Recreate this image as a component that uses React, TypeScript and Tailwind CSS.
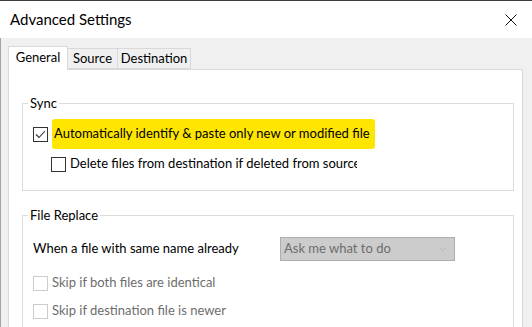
import { ChevronDown } from "lucide-react";

const font = "font-['Lato','Noto_Sans',sans-serif]";

function CheckBox({ checked, disabled }: { checked?: boolean; disabled?: boolean }) {
  return (
    <span
      className={
        "flex size-[15px] shrink-0 items-center justify-center border bg-white " +
        (disabled ? "border-[#cccccc]" : "border-[#333333]")
      }
    >
      {checked ? (
        <svg width="11" height="9" viewBox="0 0 11 9" fill="none">
          <path d="M1 4.5 L4 7.5 L10 1" stroke="#333333" strokeWidth="1.1" />
        </svg>
      ) : null}
    </span>
  );
}

export default function App() {
  return (
    <div className={`h-[327px] w-[532px] overflow-hidden border-t border-[#3c3c3c] bg-[#f0f0f0] text-[13px] text-black ${font}`}>
      <header className="flex h-[37px] items-center justify-between bg-white pl-[10px] pr-[15px]">
        <span className="text-[15px]">Advanced Settings</span>
        <svg width="12" height="12" viewBox="0 0 12 12">
          <path d="M0.5 0.5 L11.5 11.5 M11.5 0.5 L0.5 11.5" stroke="#111111" strokeWidth="1" />
        </svg>
      </header>

      <div className="h-[290px] border-l border-[#a3a3a3] pl-[7px] pt-[8px]">
        <div className="flex h-[23px] items-end">
          <div className="relative z-10 -mb-px flex h-[24px] w-[60px] items-center justify-center border border-b-0 border-[#d9d9d9] bg-white pb-[2px]">
            General
          </div>
          <div className="flex h-[21px] w-[50px] items-center justify-center border border-l-0 border-[#d9d9d9] bg-[#f0f0f0]">
            Source
          </div>
          <div className="flex h-[21px] w-[73px] items-center justify-center border border-l-0 border-[#d9d9d9] bg-[#f0f0f0]">
            Destination
          </div>
        </div>

        <div className="h-[270px] w-[515px] border border-[#d9d9d9] bg-white pl-[13px] pr-[8px] pt-[23px]">
          <fieldset className="border border-[#dcdcdc] pb-[12px]">
            <legend className="ml-[5px] h-[20px] px-[2px] leading-[20px]">Sync</legend>
            <div className="mt-[7px] flex h-[28px] items-center gap-[4px] pl-[10px]">
              <CheckBox checked />
              <span className="flex h-[30px] items-center rounded-[3px] bg-[#ffe600] pl-[2px] pr-[5px]">
                Automatically identify &amp; paste only new or modified file
              </span>
            </div>
            <div className="ml-[10px] mt-[2px] flex h-[28px] w-[324px] items-center gap-[4px] overflow-hidden whitespace-nowrap pl-[18px]">
              <CheckBox />
              <span>Delete files from destination if deleted from source</span>
            </div>
          </fieldset>

          <fieldset className="mt-[14px] h-[140px] border border-[#dcdcdc]">
            <legend className="ml-[5px] h-[20px] px-[2px] leading-[20px]">File Replace</legend>
            <div className="mt-[12px] flex h-[24px] items-center pl-[10px]">
              <span className="w-[247px]">When a file with same name already</span>
              <div className="flex h-[24px] w-[175px] items-center justify-between border border-[#adadad] bg-[#cccccc] pl-[3px] pr-[6px] text-[#6d6d6d]">
                <span>Ask me what to do</span>
                <ChevronDown className="size-[11px] text-[#a5a5a5]" strokeWidth={1.2} />
              </div>
            </div>
            <div className="mt-[9px] flex h-[26px] items-center gap-[4px] pl-[10px] text-[#6d6d6d]">
              <CheckBox disabled />
              <span>Skip if both files are identical</span>
            </div>
            <div className="mt-[2px] flex h-[26px] items-center gap-[4px] pl-[10px] text-[#6d6d6d]">
              <CheckBox disabled />
              <span>Skip if destination file is newer</span>
            </div>
          </fieldset>
        </div>
      </div>
    </div>
  );
}
